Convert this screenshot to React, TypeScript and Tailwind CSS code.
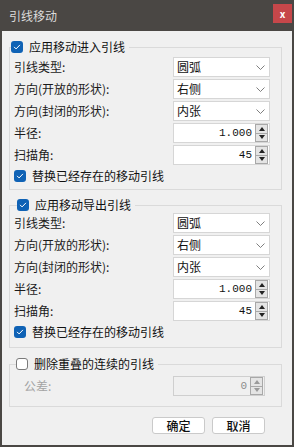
import React from "react";

const FONT = "font-['Noto_Sans_CJK_SC','Noto_Sans',sans-serif]";
const MONO = "font-['Liberation_Mono',monospace]";

function Check({ checked }: { checked: boolean }) {
  if (!checked) {
    return <span className="block h-[12px] w-[12px] shrink-0 rounded-[3px] border border-[#7a7a7a] bg-white" />;
  }
  return (
    <span className="flex h-[12px] w-[12px] shrink-0 items-center justify-center rounded-[3px] bg-[#0f62b5]">
      <svg viewBox="0 0 12 12" className="h-[10px] w-[10px]" fill="none" stroke="white" strokeWidth={1.2}>
        <path d="M2.8 6.2l2.1 2.1 4.3-4.5" strokeLinecap="round" strokeLinejoin="round" />
      </svg>
    </span>
  );
}

function Select({ value }: { value: string }) {
  return (
    <div className="flex h-[20px] w-[97px] items-center justify-between border border-[#d6d6d6] bg-white pl-[3px] pr-[4px] text-[12px] text-[#111]">
      <span>{value}</span>
      <svg viewBox="0 0 9 5" className="h-[5px] w-[9px]" fill="none" stroke="#707070" strokeWidth={0.9}>
        <path d="M0.5 0.5l4 4 4-4" />
      </svg>
    </div>
  );
}

function Spinner({ disabled }: { disabled?: boolean }) {
  const c = disabled ? "#9a9a9a" : "#222";
  return (
    <div className="flex h-[18px] w-[13px] flex-col border border-[#a8a8a8] bg-[#e4e4e4]">
      <div className="flex flex-1 items-center justify-center border-b border-[#a8a8a8]">
        <svg viewBox="0 0 6 4" className="h-[4px] w-[6px]"><path d="M0 4L3 0L6 4Z" fill={c} /></svg>
      </div>
      <div className="flex flex-1 items-center justify-center">
        <svg viewBox="0 0 6 4" className="h-[4px] w-[6px]"><path d="M0 0L3 4L6 0Z" fill={c} /></svg>
      </div>
    </div>
  );
}

function Spin({ value, disabled, width = "w-[97px]" }: { value: string; disabled?: boolean; width?: string }) {
  return (
    <div
      className={`flex h-[20px] ${width} items-center justify-end gap-[3px] border pr-[1px] ${
        disabled ? "border-[#cfcfcf] bg-[#f0f0f0] text-[#8c8c8c]" : "border-[#d6d6d6] bg-white text-[#111]"
      }`}
    >
      <span className={`${MONO} text-[11px] leading-none`}>{value}</span>
      <Spinner disabled={disabled} />
    </div>
  );
}

function Row({ label, children }: { label: string; children: React.ReactNode }) {
  return (
    <div className="flex h-[20px] items-center justify-between">
      <span className="text-[12px] text-[#1b1b1b]">{label}</span>
      {children}
    </div>
  );
}

function LeaderGroup({ title, legendMl, className }: { title: string; legendMl: string; className: string }) {
  return (
    <fieldset className={`border border-[#dadada] ${className}`}>
      <legend className={`flex h-[16px] items-center gap-[6px] pr-[4px] ${legendMl}`}>
        <Check checked />
        <span className="text-[12px] text-[#111]">{title}</span>
      </legend>
      <div className="flex flex-col gap-[2px] pl-[4px] pr-[11px]">
        <Row label="引线类型:">
          <Select value="圆弧" />
        </Row>
        <Row label="方向(开放的形状):">
          <Select value="右侧" />
        </Row>
        <Row label="方向(封闭的形状):">
          <Select value="内张" />
        </Row>
        <Row label="半径:">
          <Spin value="1.000" />
        </Row>
        <Row label="扫描角:">
          <Spin value="45" />
        </Row>
        <div className="mt-[1px] flex h-[16px] items-center gap-[6px]">
          <Check checked />
          <span className="text-[12px] text-[#111]">替换已经存在的移动引线</span>
        </div>
      </div>
    </fieldset>
  );
}

export default function App() {
  return (
    <div className={`${FONT} flex h-[447px] w-[294px] flex-col bg-[#4a4744]`}>
      <div className="flex h-[31px] shrink-0 items-center justify-between pl-[9px] pr-[2px]">
        <span className="text-[12px] text-[#dcdcdc]">引线移动</span>
        <div className="mb-[4px] flex h-[19px] w-[19px] items-center justify-center bg-[#c6474a] text-[10px] font-bold leading-none text-white">
          x
        </div>
      </div>
      <div className="mx-[2px] mb-[2px] flex flex-1 flex-col bg-[#f0f0f0] pl-[7px] pr-[10px] pt-[8px]">
        <LeaderGroup title="应用移动进入引线" legendMl="ml-[1px]" className="pt-[2px] pb-[5px]" />
        <LeaderGroup title="应用移动导出引线" legendMl="ml-[7px]" className="mt-[7px] pb-[7px]" />
        <fieldset className="mt-[8px] border border-[#dadada] pb-[10px]">
          <legend className="ml-[6px] flex h-[16px] items-center gap-[6px] pr-[4px]">
            <Check checked={false} />
            <span className="text-[12px] text-[#111]">删除重叠的连续的引线</span>
          </legend>
          <div className="mt-[4px] flex h-[20px] items-center justify-between pl-[14px] pr-[16px]">
            <span className="text-[12px] text-[#a3a3a3]">公差:</span>
            <Spin value="0" disabled width="w-[92px]" />
          </div>
        </fieldset>
        <div className="mt-[10px] flex justify-end gap-[7px] pr-[17px]">
          <button className="flex h-[17px] w-[53px] items-center justify-center rounded-[3px] border border-[#cacaca] bg-white text-[12px] font-medium text-[#111]">
            确定
          </button>
          <button className="flex h-[17px] w-[53px] items-center justify-center rounded-[3px] border border-[#cacaca] bg-white text-[12px] font-medium text-[#111]">
            取消
          </button>
        </div>
      </div>
    </div>
  );
}
